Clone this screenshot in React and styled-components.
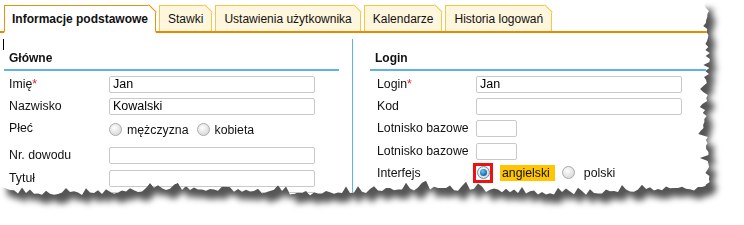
import styled, { createGlobalStyle } from "styled-components";

const GlobalStyle = createGlobalStyle`
  body {
    margin: 0;
    background: #fff;
    font-family: "Liberation Sans", Arial, sans-serif;
    font-size: 12.3px;
    color: #111;
  }
`;

// torn paper edge, fixed seed so it looks the same every time
const tornEdge = (() => {
  let seed = 11;
  const rnd = () => {
    seed = (seed * 16807) % 2147483647;
    return seed / 2147483647;
  };
  const pts = ["0px 0px", "707px 0px"];
  for (let y = 5; y < 186; y += 3) {
    const x = 704 + rnd() * 5 - (rnd() > 0.8 ? 5 : 0) + Math.sin(y / 25) * 1.5;
    pts.push(`${x.toFixed(1)}px ${y}px`);
  }
  for (let x = 706; x >= 10; x -= 4) {
    const y = 188 + Math.sin(x / 40) * 2.5 + rnd() * 5 - (rnd() > 0.85 ? 5 : 0);
    pts.push(`${x}px ${y.toFixed(1)}px`);
  }
  pts.push("0px 186px");
  return `polygon(${pts.join(", ")})`;
})();

const Frame = styled.div`
  width: 744px;
  height: 225px;
  overflow: hidden;
`;

const Shadow = styled.div`
  filter: drop-shadow(7px 9px 3px rgba(85, 85, 85, 1));
`;

const Paper = styled.div`
  width: 716px;
  height: 200px;
  background: #fff;
  clip-path: ${tornEdge};
`;

const TabBar = styled.div`
  display: flex;
  align-items: flex-end;
  gap: 3px;
  height: 29px;
  padding-top: 2px;
  padding-left: 4px;
  border-bottom: 2px solid #e68a00;
  width: 706px;
`;

const Tab = styled.div`
  position: relative;
  box-sizing: border-box;
  display: flex;
  align-items: center;
  padding: 0 ${(p) => (p.$active ? "7px" : "8px")};
  background: ${(p) => (p.$active ? "#fff" : "#fff7dd")};
  border: 1px solid ${(p) => (p.$active ? "#e59412" : "#f4c64a")};
  border-bottom: ${(p) => (p.$active ? "2px solid #fff" : "none")};
  margin-bottom: ${(p) => (p.$active ? "-2px" : "0")};
  height: ${(p) => (p.$active ? "28px" : "26px")};
  font-size: 12px;
  font-weight: ${(p) => (p.$active ? "bold" : "normal")};
  white-space: nowrap;

  &::before {
    content: "";
    position: absolute;
    top: -1px;
    right: -1px;
    border-top: 8px solid #fff;
    border-left: 8px solid transparent;
  }
  &::after {
    content: "";
    position: absolute;
    top: 2px;
    right: -3px;
    width: 11px;
    height: 1px;
    background: ${(p) => (p.$active ? "#e59412" : "#f4c64a")};
    transform: rotate(45deg);
  }
`;

const Body = styled.div`
  position: relative;
  display: flex;
  padding-top: 6px;
  padding-left: 4px;
  height: 160px;

  &::before {
    content: "";
    position: absolute;
    left: 3px;
    top: 6px;
    width: 1px;
    height: 11px;
    background: #000;
  }
`;

const Column = styled.div`
  width: ${(p) => p.$w}px;
  padding-top: 12px;
  padding-left: ${(p) => p.$pl}px;
  box-sizing: border-box;
`;

const Divider = styled.div`
  width: 1px;
  background: #5db3e3;
  height: 160px;
`;

const SectionTitle = styled.div`
  font-weight: bold;
  font-size: 12px;
  padding-left: ${(p) => p.$pl}px;
  height: 15px;
  line-height: 15px;
  border-bottom: 2px solid #5db3e3;
  padding-bottom: 3px;
  width: ${(p) => p.$w}px;
  margin-bottom: 5px;
`;

const Row = styled.div`
  display: flex;
  align-items: flex-start;
  height: ${(p) => p.$h || 22}px;
`;

const Label = styled.div`
  width: ${(p) => p.$w}px;
  padding-left: ${(p) => p.$pl}px;
  padding-top: 1px;
  box-sizing: border-box;
  line-height: 14px;
  color: #111;
`;

const Req = styled.span`
  color: #d8262b;
`;

const Input = styled.div`
  width: ${(p) => p.$w}px;
  height: 17px;
  box-sizing: border-box;
  border: 1px solid #c9c9c9;
  border-radius: 2px;
  padding: 0 3px;
  line-height: 15px;
  font-size: 12.5px;
  color: #000;
  background: #fff;
`;

const RadioGroup = styled.div`
  display: flex;
  align-items: center;
  height: 17px;
  margin-top: ${(p) => p.$mt || 0}px;
`;

const Radio = styled.span`
  display: inline-block;
  width: 13px;
  height: 13px;
  box-sizing: border-box;
  border-radius: 50%;
  border: 1px solid #a9a9a9;
  background: radial-gradient(circle at 40% 35%, #fdfdfd 0%, #e4e4e4 55%, #cfcfcf 100%);
  position: relative;
  flex: none;

  ${(p) =>
    p.$checked &&
    `
    border-color: #6d8fa8;
    &::after {
      content: "";
      position: absolute;
      left: 2px;
      top: 2px;
      width: 7px;
      height: 7px;
      border-radius: 50%;
      background: radial-gradient(circle at 40% 35%, #6fc6f4 0%, #1a74b8 60%, #0b4b86 100%);
    }
  `}
`;

const Focus = styled.span`
  display: inline-flex;
  align-items: center;
  justify-content: center;
  width: 20px;
  height: 20px;
  box-sizing: border-box;
  border: 3px solid #ee1111;
  margin-left: -3px;
`;

const Option = styled.span`
  margin-left: ${(p) => p.$ml}px;
  margin-right: ${(p) => p.$mr}px;
  padding: ${(p) => (p.$hl ? "1px 5px 1px 2px" : "0")};
  background: ${(p) => (p.$hl ? "#ffc500" : "transparent")};
  line-height: 14px;
`;

export default function App() {
  return (
    <>
      <GlobalStyle />
      <Frame>
        <Shadow>
          <Paper>
            <TabBar>
              <Tab $active>Informacje podstawowe</Tab>
              <Tab>Stawki</Tab>
              <Tab>Ustawienia użytkownika</Tab>
              <Tab>Kalendarze</Tab>
              <Tab>Historia logowań</Tab>
            </TabBar>
            <Body>
              <Column $w={348} $pl={0}>
                <SectionTitle $pl={5} $w={330}>Główne</SectionTitle>
                <Row>
                  <Label $w={105} $pl={5}>Imię<Req>*</Req></Label>
                  <Input $w={206}>Jan</Input>
                </Row>
                <Row>
                  <Label $w={105} $pl={5}>Nazwisko</Label>
                  <Input $w={206}>Kowalski</Input>
                </Row>
                <Row $h={27}>
                  <Label $w={105} $pl={5}>Płeć</Label>
                  <RadioGroup $mt={1}>
                    <Radio />
                    <Option $ml={5} $mr={8}>mężczyzna</Option>
                    <Radio />
                    <Option $ml={5} $mr={0}>kobieta</Option>
                  </RadioGroup>
                </Row>
                <Row $h={23}>
                  <Label $w={105} $pl={5}>Nr. dowodu</Label>
                  <Input $w={206} />
                </Row>
                <Row>
                  <Label $w={105} $pl={5}>Tytuł</Label>
                  <Input $w={206} />
                </Row>
                <Row>
                  <Label $w={105} $pl={5}>Stanowisko</Label>
                  <Input $w={206}>KONSULTANT</Input>
                </Row>
              </Column>
              <Divider />
              <Column $w={360} $pl={17}>
                <SectionTitle $pl={5} $w={331}>Login</SectionTitle>
                <Row>
                  <Label $w={106} $pl={7}>Login<Req>*</Req></Label>
                  <Input $w={206}>Jan</Input>
                </Row>
                <Row>
                  <Label $w={106} $pl={7}>Kod</Label>
                  <Input $w={206} />
                </Row>
                <Row $h={23}>
                  <Label $w={106} $pl={7}>Lotnisko bazowe</Label>
                  <Input $w={41} />
                </Row>
                <Row>
                  <Label $w={106} $pl={7}>Lotnisko bazowe</Label>
                  <Input $w={41} />
                </Row>
                <Row>
                  <Label $w={106} $pl={7}>Interfejs</Label>
                  <RadioGroup $mt={-1}>
                    <Focus>
                      <Radio $checked />
                    </Focus>
                    <Option $ml={7} $mr={7} $hl>angielski</Option>
                    <Radio />
                    <Option $ml={9} $mr={0}>polski</Option>
                  </RadioGroup>
                </Row>
              </Column>
            </Body>
          </Paper>
        </Shadow>
      </Frame>
    </>
  );
}
